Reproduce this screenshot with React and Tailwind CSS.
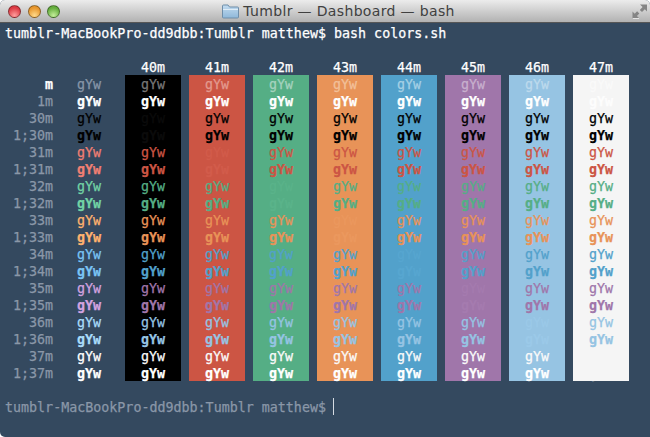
// one entry per row: label, bold, sample colour and the text colour in each of the 8 background columns
const rows = [
  { label: "m", labelCls: "text-white font-bold", sample: "text-[#8796a8]", cols: ["text-[#777777]", "text-[#e39a8f]", "text-[#a5d3bf]", "text-[#f2c09a]", "text-[#a5d0e5]", "text-[#c8b0ce]", "text-[#bddaed]", "text-[#fafafa]"] },
  { label: "1m", bold: true, sample: "text-white", cols: ["text-white", "text-white", "text-white", "text-white", "text-white", "text-white", "text-white", "text-[#fdfdfd]"] },
  { label: "30m", sample: "text-black", same: 0, text: "text-black", sameCls: "text-[#0b0b0b]" },
  { label: "1;30m", bold: true, sample: "text-black", same: 0, text: "text-black", sameCls: "text-[#0b0b0b]" },
  { label: "31m", sample: "text-[#f07f73]", same: 1, text: "text-[#cc5544]", sameCls: "text-[#d25c4b]" },
  { label: "1;31m", bold: true, sample: "text-[#f07f73]", same: 1, text: "text-[#cc5544]", sameCls: "text-[#d25c4b]" },
  { label: "32m", sample: "text-[#72d3a5]", same: 2, text: "text-[#55ae85]", sameCls: "text-[#5ab38a]" },
  { label: "1;32m", bold: true, sample: "text-[#72d3a5]", same: 2, text: "text-[#55ae85]", sameCls: "text-[#5ab38a]" },
  { label: "33m", sample: "text-[#ffb26e]", same: 3, text: "text-[#e89358]", sameCls: "text-[#eb985e]" },
  { label: "1;33m", bold: true, sample: "text-[#ffb26e]", same: 3, text: "text-[#e89358]", sameCls: "text-[#eb985e]" },
  { label: "34m", sample: "text-[#7ac4f5]", same: 4, text: "text-[#52a1cb]", sameCls: "text-[#57a6d0]" },
  { label: "1;34m", bold: true, sample: "text-[#7ac4f5]", same: 4, text: "text-[#52a1cb]", sameCls: "text-[#57a6d0]" },
  { label: "35m", sample: "text-[#d3a3e0]", same: 5, text: "text-[#a076aa]", sameCls: "text-[#a57baf]" },
  { label: "1;35m", bold: true, sample: "text-[#d3a3e0]", same: 5, text: "text-[#a076aa]", sameCls: "text-[#a57baf]" },
  { label: "36m", sample: "text-[#a9dcfa]", same: 6, text: "text-[#96c4e3]", sameCls: "text-[#9bc9e8]" },
  { label: "1;36m", bold: true, sample: "text-[#a9dcfa]", same: 6, text: "text-[#96c4e3]", sameCls: "text-[#9bc9e8]" },
  { label: "37m", sample: "text-white", same: 7, text: "text-[#fafafa]", sameCls: "text-[#f5f5f5]" },
  { label: "1;37m", bold: true, sample: "text-white", same: 7, text: "text-white", sameCls: "text-[#f5f5f5]" },
];

const columns = [
  { name: "40m", bg: "bg-black" },
  { name: "41m", bg: "bg-[#cc5544]" },
  { name: "42m", bg: "bg-[#55ae85]" },
  { name: "43m", bg: "bg-[#e89358]" },
  { name: "44m", bg: "bg-[#52a1cb]" },
  { name: "45m", bg: "bg-[#a076aa]" },
  { name: "46m", bg: "bg-[#96c4e3]" },
  { name: "47m", bg: "bg-[#f5f5f5]" },
];

function cellColor(row, i) {
  if (row.cols) return row.cols[i];
  return row.same === i ? row.sameCls : row.text;
}

function Light({ color }) {
  return <span className={`w-[13px] h-[13px] rounded-full border border-[#00000066] ${color}`} />;
}

function FolderIcon() {
  return (
    <svg width="17" height="15" viewBox="0 0 17 15">
      <defs>
        <linearGradient id="folder" x1="0" y1="0" x2="0" y2="1">
          <stop offset="0" stopColor="#c3dcf0" />
          <stop offset="1" stopColor="#8fb8da" />
        </linearGradient>
      </defs>
      <path d="M.5 13V2q0-1 1-1h4.500l1.500 2h8q1 0 1 1v9q0 1-1 1h-14q-1 0-1-1z" fill="url(#folder)" stroke="#6f8ea9" />
      <path d="M1 5.500h15" stroke="#e0edf7" />
    </svg>
  );
}

function ResizeIcon() {
  return (
    <svg width="15" height="15" viewBox="0 0 15 15">
      <path d="M15 .5v7l-2.200-2.200-2.800 2.800-2.200-2.200 2.800-2.800L8 .5z" fill="#858585" />
      <path d="M.5 14V7.500l2.200 2.200 2.400-2.400 2.200 2.200-2.400 2.400L7 14z" fill="#858585" />
      <path d="M1 14.500h6" stroke="#e4e4e4" />
    </svg>
  );
}

export default function App() {
  return (
    <div className="w-[650px] h-[437px] bg-white overflow-hidden">
      <div className="h-full flex flex-col rounded-t-[5px] rounded-bl-[5px] overflow-hidden bg-[#34495f]">
        <div className="h-[23px] shrink-0 flex items-center pl-[8px] pr-[3px] bg-gradient-to-b from-[#ececec] to-[#b2b2b2] border-b border-[#565656]">
          <div className="w-[62px] flex gap-[6.500px]">
            <Light color="bg-[radial-gradient(circle_at_50%_85%,#ff9d9d,#dc3a42_70%)]" />
            <Light color="bg-[radial-gradient(circle_at_50%_85%,#ffd98a,#e8962c_70%)]" />
            <Light color="bg-[radial-gradient(circle_at_50%_85%,#c4ee9a,#64ad3c_70%)]" />
          </div>
          <div className="flex-1 flex items-center justify-center gap-[4px] text-[14px] tracking-[0.35px] text-[#404040] font-['DejaVu_Sans',sans-serif]">
            <FolderIcon />
            <span>Tumblr — Dashboard — bash</span>
          </div>
          <div className="w-[40px] flex justify-end">
            <ResizeIcon />
          </div>
        </div>

        <div className="flex-1 pl-[5px] font-['DejaVu_Sans_Mono',monospace] text-[13.33px] leading-[17px] text-white whitespace-pre [-webkit-text-stroke:0.25px]">
          <div className="h-[17px] mt-[2px]">tumblr-MacBookPro-dd9dbb:Tumblr matthew$ bash colors.sh</div>
          <div className="h-[17px]" />

          <div className="flex">
            <div className="w-[48px] mt-[17px] text-right text-[#8a97a8]">
              {rows.map((r) => (
                <div key={r.label} className={`h-[17px] ${r.labelCls || ""}`}>{r.label}</div>
              ))}
            </div>
            <div className="w-[24px] ml-[24px] mt-[17px]">
              {rows.map((r) => (
                <div key={r.label} className={`h-[17px] ${r.sample} ${r.bold ? "font-bold" : ""}`}>gYw</div>
              ))}
            </div>
            <div className="flex gap-[8px] ml-[24px]">
              {columns.map((c, i) => (
                <div key={c.name} className="w-[56px]">
                  <div className="h-[16px] text-center">{c.name}</div>
                  <div className={`${c.bg} h-[306px] pt-[1px] text-center`}>
                    {rows.map((r) => (
                      <div key={r.label} className={`h-[17px] ${cellColor(r, i)} ${r.bold ? "font-bold" : ""}`}>gYw</div>
                    ))}
                  </div>
                </div>
              ))}
            </div>
          </div>

          <div className="flex items-center mt-[17px] h-[17px] text-[#8a97a8]">
            <span>tumblr-MacBookPro-dd9dbb:Tumblr matthew$ </span>
            <span className="w-px h-[17px] -ml-px mb-[2px] bg-[#d5dbe2]" />
          </div>
        </div>
      </div>
    </div>
  );
}
